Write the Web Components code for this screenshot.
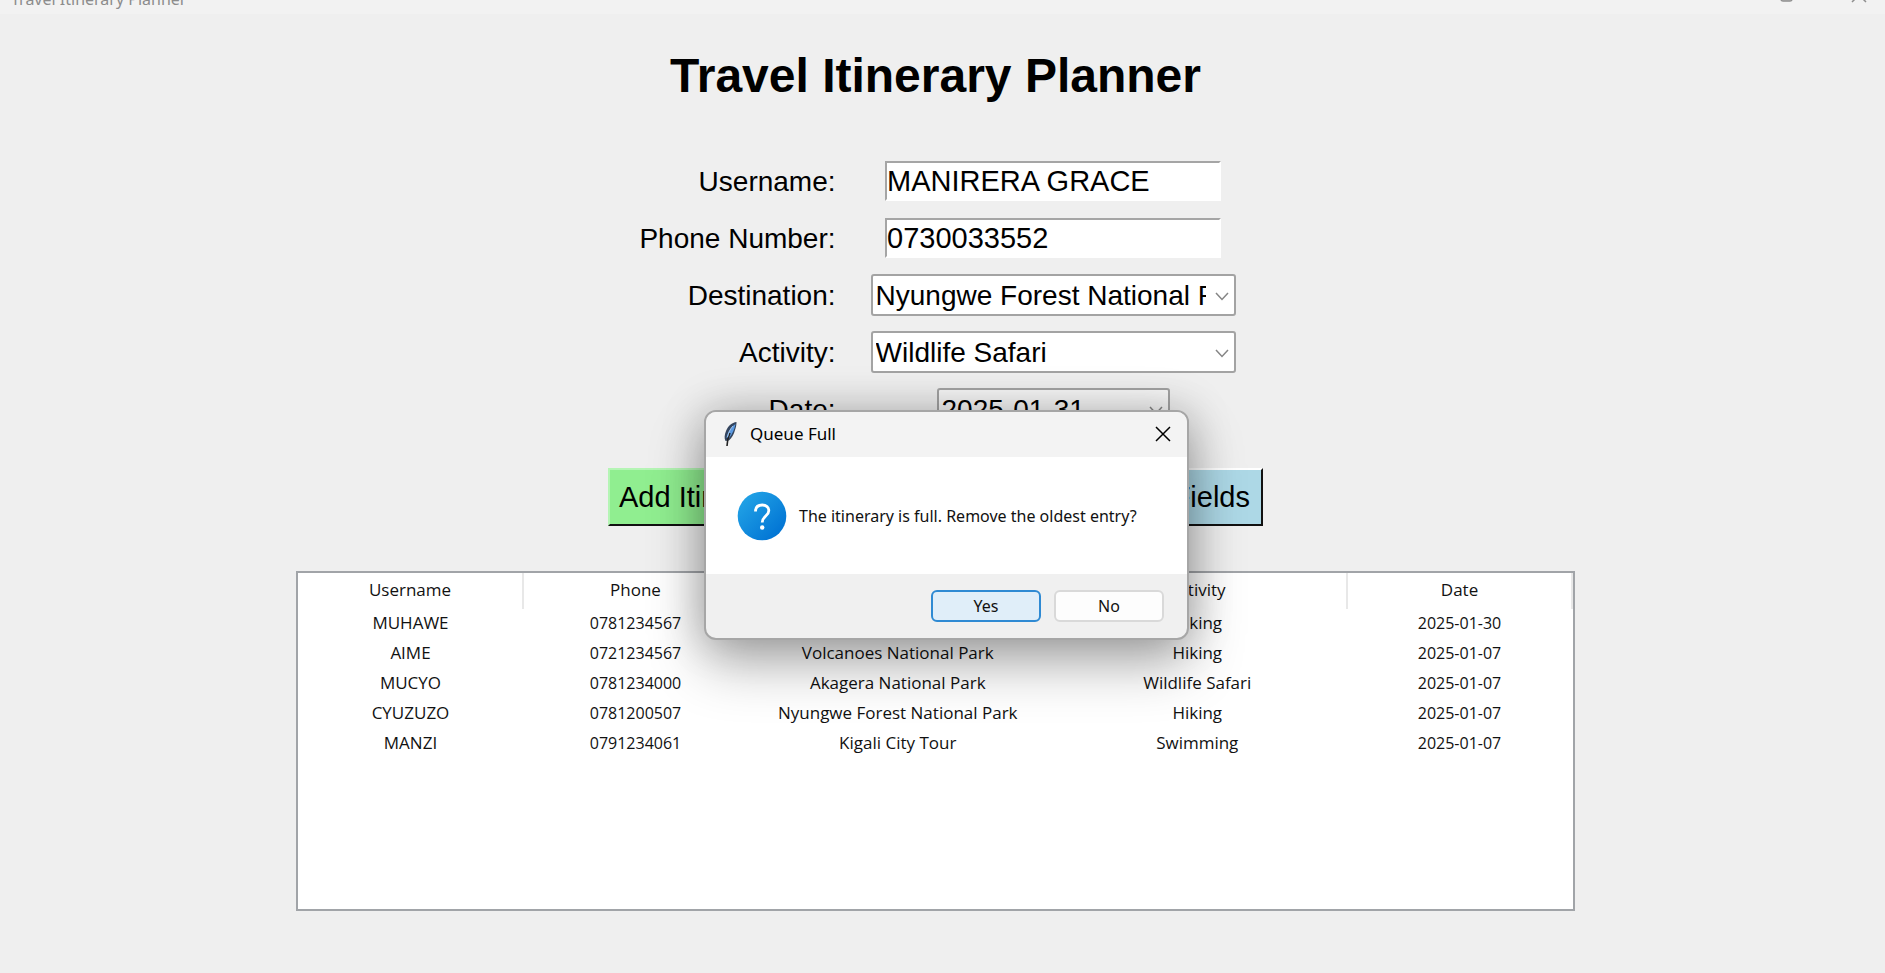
<!DOCTYPE html>
<html lang="en">
<head>
<meta charset="utf-8">
<title>Travel Itinerary Planner</title>
<style>
  html, body { margin: 0; min-height: 100%; background: #efefef; }
  body { min-height: 100vh; overflow: hidden; font-family: "Liberation Sans", Arial, sans-serif; color: #000; }
</style>
</head>
<body>
<planner-app></planner-app>
<script>
  const define = (name, html, setup) => {
    const template = document.createElement('template');
    template.innerHTML = html;
    customElements.define(name, class extends HTMLElement {
      connectedCallback() {
        if (this.shadowRoot) return;
        const root = this.attachShadow({ mode: 'open' });
        root.append(template.content.cloneNode(true));
        if (setup) setup(this, root);
      }
    });
  };

  /* Window caption, scrolled partly out of view */
  define('window-caption', `
    <style>
      :host { display: flex; justify-content: space-between; align-items: flex-end; box-sizing: border-box;
        height: 14px; padding: 0 18px 0 11px; overflow: hidden; background: #f2f2f2; color: #8c8c8c;
        font: 16px/24px "Noto Sans", sans-serif; }
      .name { margin-bottom: 3px; }
      svg { display: block; margin-bottom: 10px; overflow: visible; fill: none; stroke: #8f8f8f; stroke-width: 1.5; }
    </style>
    <span class="name"><slot></slot></span>
    <svg width="88" height="16" aria-hidden="true">
      <rect x="2" y="2" width="11" height="11" rx="2" fill="#cfcfcf"/>
      <path d="M73 0l14 14M87 0l-14 14"/>
    </svg>`);

  define('entry-field', `
    <style>
      :host { display: contents; }
      label { justify-self: end; padding-top: 2px; font-size: 28px; line-height: 40px; white-space: nowrap; }
      input { justify-self: center; box-sizing: border-box; width: 336px; height: 40px; margin: 0; padding: 0;
        border: 2px solid; border-color: #a5a5a5 #fff #fff #a5a5a5; border-radius: 0; background: #fff; color: #000;
        font: inherit; font-size: 29px; outline: none; }
    </style>
    <label for="value"></label><input id="value" type="text">`, (host, root) => {
      root.querySelector('label').textContent = host.getAttribute('label');
      root.querySelector('input').value = host.getAttribute('value');
    });

  define('choice-field', `
    <style>
      :host { display: contents; }
      label { justify-self: end; padding-top: 2px; font-size: 28px; line-height: 40px; white-space: nowrap; }
      .box { position: relative; justify-self: center; width: 365px; height: 42px; }
      :host([narrow]) .box { width: 233px; }
      select { appearance: none; box-sizing: border-box; width: 100%; height: 100%; margin: 0; padding: 0 28px 0 3px;
        border: 2px solid #a3a3a3; border-radius: 3px; background: #fff; color: #000; font: inherit; font-size: 28px; outline: none; }
      :host([narrow]) select { background: #f7f7f7; }
      svg { position: absolute; right: 7px; top: 18px; fill: none; stroke: #858585; stroke-width: 1.5; pointer-events: none; }
    </style>
    <label for="value"></label>
    <div class="box"><select id="value"></select><svg width="14" height="9" aria-hidden="true"><path d="M1 1l6 6.500l6-6.500"/></svg></div>`,
    (host, root) => {
      root.querySelector('label').textContent = host.getAttribute('label');
      root.querySelector('select').append(new Option(host.getAttribute('value')));
    });

  define('action-button', `
    <style>
      :host { display: block; }
      button { box-sizing: border-box; height: 58px; margin: 0; padding: 0 11px 0 9px; border: 2px solid;
        border-color: #fff #111 #111 #fff; border-radius: 0; background: var(--face); color: #000; font: inherit; font-size: 29px; white-space: nowrap; }
      :host([soft]) button { border-color: #b5f5b5 #111 #111 #b5f5b5; }
    </style>
    <button type="button"><slot></slot></button>`);

  define('itinerary-table', `
    <style>
      :host { display: block; box-sizing: border-box; width: min(1279px, 100%); height: 340px; border: 2px solid #a1a4a8; background: #fff; }
      table { width: 100%; table-layout: fixed; border-collapse: collapse; font: 17px/24px "Open Sans", sans-serif; color: #111; }
      th { height: 36px; padding: 0 0 2px; font-weight: 400; box-sizing: border-box; border-right: 2px solid #e8e8e8; }
      td { height: 30px; padding: 0 0 2px; text-align: center; white-space: nowrap; box-sizing: border-box; }
      td.numeric { font-size: 16px; }
      .small { width: 225px; }
    </style>
    <table>
      <colgroup><col class="small"><col class="small"><col><col><col class="small"></colgroup>
      <thead><tr></tr></thead><tbody></tbody>
    </table>`, (host, root) => {
      const cell = (tag, text) => {
        const element = Object.assign(document.createElement(tag), { textContent: text });
        if (/^[0-9]/.test(text)) element.className = 'numeric';
        return element;
      };
      root.querySelector('thead tr').append(...['Username', 'Phone', 'Destination', 'Activity', 'Date'].map(t => cell('th', t)));
      for (const row of [
        ['MUHAWE', '0781234567', 'Kigali City Tour', 'Hiking', '2025-01-30'],
        ['AIME', '0721234567', 'Volcanoes National Park', 'Hiking', '2025-01-07'],
        ['MUCYO', '0781234000', 'Akagera National Park', 'Wildlife Safari', '2025-01-07'],
        ['CYUZUZO', '0781200507', 'Nyungwe Forest National Park', 'Hiking', '2025-01-07'],
        ['MANZI', '0791234061', 'Kigali City Tour', 'Swimming', '2025-01-07']
      ]) {
        const tr = document.createElement('tr');
        tr.append(...row.map(t => cell('td', t)));
        root.querySelector('tbody').append(tr);
      }
    });

  define('message-dialog', `
    <style>
      :host { display: block; box-sizing: border-box; width: 485px; border: 2px solid #a6a6a6; border-radius: 12px;
        background: #f0f0f0; overflow: hidden; font-family: "Noto Sans", sans-serif; color: #111;
        box-shadow: 0 24px 56px rgba(0,0,0,.3), 0 0 44px rgba(0,0,0,.22); }
      header { display: flex; align-items: center; box-sizing: border-box; height: 45px; padding: 0 16px 2px; background: #f3f3f3; color: #000; }
      h2 { flex: 1; margin: 0 0 0 12px; font-size: 17px; line-height: 24px; font-weight: 400; }
      .close { display: flex; padding: 0; border: 0; background: none; }
      .body { display: flex; align-items: center; gap: 12px; height: 117px; padding: 0 31px; background: #fff; }
      p { margin: 0; font-size: 16px; line-height: 24px; white-space: nowrap; }
      footer { display: flex; justify-content: flex-end; gap: 13px; padding: 16px 23px; height: 32px; }
      footer button { box-sizing: border-box; width: 110px; height: 32px; padding: 0; border: 2px solid #d9d9d9; border-radius: 6px;
        background: #fdfdfd; color: #111; font: 16px/24px "Noto Sans", sans-serif; }
      footer .primary { border-color: #2f8ad3; background: #e0eef9; }
      svg { display: block; }
    </style>
    <header>
      <svg width="16" height="26" viewBox="0 0 16 26" aria-hidden="true">
        <path d="M14.500 1C10 1.500 6 5 4 10C2.500 14 2 17 3.500 20L7 19.500C10 17 12 13 13 9C14 6 14.500 4 14.500 1Z" fill="#34455e"/>
        <path d="M13.500 3C9 6 5.500 11 4.500 17L7.500 16.500C10.500 13 12.500 8 13.500 3Z" fill="#5b9ae2"/>
        <path d="M8 12C6 16 5 20 5 25" fill="none" stroke="#222" stroke-width="1.600"/>
        <path d="M11 5C8 8 6.500 12 5.500 16" fill="none" stroke="#b8d0ed" stroke-width=".8"/>
      </svg>
      <h2>Queue Full</h2>
      <button class="close" type="button" aria-label="Close"><svg width="16" height="16" aria-hidden="true"><path d="M1 1l14 14M15 1L1 15" fill="none" stroke="#000" stroke-width="1.500"/></svg></button>
    </header>
    <div class="body">
      <svg width="50" height="50" viewBox="0 0 50 50" aria-hidden="true">
        <defs><linearGradient id="blue" x1="0" y1="0" x2="1" y2="1"><stop offset="0.100" stop-color="#22a3e6"/><stop offset="0.900" stop-color="#0072d3"/></linearGradient></defs>
        <circle cx="25" cy="25" r="24.300" fill="url(#blue)"/>
        <path d="M18.500 20.500C18.500 16.500 21 14 25.200 14C29.300 14 31.800 16.300 31.800 19.800C31.800 25 25.200 25.300 25.200 31.500" fill="none" stroke="#fff" stroke-width="2.800"/>
        <circle cx="25.200" cy="36.500" r="2.200" fill="#fff"/>
      </svg>
      <p><slot></slot></p>
    </div>
    <footer><button class="primary" type="button">Yes</button><button type="button">No</button></footer>`);

  define('planner-app', `
    <style>
      :host { display: block; position: relative; }
      main { display: flex; flex-direction: column; align-items: center; padding: 32px 14px 0 0; }
      h1 { margin: 0; font-size: 48px; line-height: 60px; font-weight: 700; }
      .form { display: grid; grid-template-columns: max-content 365px; column-gap: 35px; grid-auto-rows: 42px; row-gap: 15px;
        align-items: center; margin-top: 54px; padding-left: 4px; }
      .actions { display: flex; justify-content: space-between; width: 655px; margin: 38px 0 45px; }
      .overlay { position: absolute; inset: 0; display: flex; align-items: flex-start; justify-content: center; padding: 410px 0 0 8px; }
    </style>
    <window-caption>Travel Itinerary Planner</window-caption>
    <main>
      <h1>Travel Itinerary Planner</h1>
      <div class="form">
        <entry-field label="Username:" value="MANIRERA GRACE"></entry-field>
        <entry-field label="Phone Number:" value="0730033552"></entry-field>
        <choice-field label="Destination:" value="Nyungwe Forest National Park"></choice-field>
        <choice-field label="Activity:" value="Wildlife Safari"></choice-field>
        <choice-field narrow label="Date:" value="2025-01-31"></choice-field>
      </div>
      <div class="actions">
        <action-button soft style="--face:#90ee90">Add Itinerary</action-button>
        <action-button style="--face:#add8e6">Clear Fields</action-button>
      </div>
      <itinerary-table></itinerary-table>
    </main>
    <div class="overlay"><message-dialog role="dialog" aria-label="Queue Full">The itinerary is full. Remove the oldest entry?</message-dialog></div>`);
</script>
</body>
</html>
